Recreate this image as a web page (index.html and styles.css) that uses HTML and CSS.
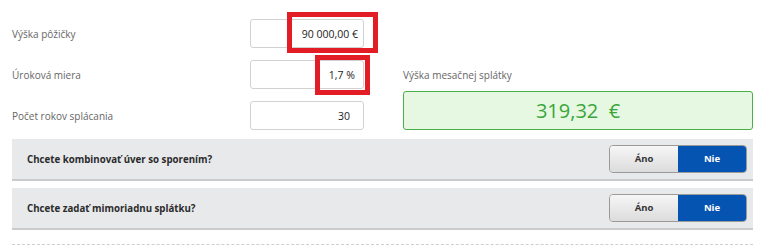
FILE: index.html
```html
<!DOCTYPE html>
<html>
<head>
    <meta charset="utf-8"/>
    <title>Kalkulačka úveru</title>
    <link rel="stylesheet" href="styles.css">
</head>
<body>
<div id="calc">
    <div class="top">
        <div class="fields">
            <div class="row">
                <span class="label">Výška pôžičky</span>
                <div class="field">
                    <input type="text" class="p-sm" value="90 000,00 €" readonly>
                    <span class="mark mark-1"></span>
                </div>
            </div>
            <div class="row">
                <span class="label">Úroková miera</span>
                <div class="field">
                    <input type="text" class="p-md" value="1,7 %" readonly>
                    <span class="mark mark-2"></span>
                </div>
            </div>
            <div class="row">
                <span class="label">Počet rokov splácania</span>
                <div class="field">
                    <input type="text" class="p-lg" value="30" readonly>
                </div>
            </div>
        </div>
        <div class="result">
            <span class="label">Výška mesačnej splátky</span>
            <div class="sum">319,32&nbsp; €</div>
        </div>
    </div>
    <div class="bar">
        <span class="question">Chcete kombinovať úver so sporením?</span>
        <div class="switch">
            <span>Áno</span>
            <span class="on">Nie</span>
        </div>
    </div>
    <div class="bar">
        <span class="question">Chcete zadať mimoriadnu splátku?</span>
        <div class="switch">
            <span>Áno</span>
            <span class="on">Nie</span>
        </div>
    </div>
    <div class="line"></div>
</div>
</body>
</html>
```

FILE: styles.css
```css
* {
    margin: 0;
    padding: 0;
    box-sizing: border-box;
}
body{
    font-family: "Open Sans", "Noto Sans", sans-serif;
    background: #fff;
}
#calc{
    width: 753px;
    padding: 19px 0 0 12px;
}
.top{
    display: flex;
    align-items: flex-end;
}
.fields{
    width: 352px;
}
.row{
    display: flex;
    align-items: center;
    height: 29px;
    margin-bottom: 12px;
}
.row:last-child{
    margin-bottom: 0;
}
.label{
    font-size: 10px;
    color: #666;
}
.row .label{
    width: 238px;
}
.field{
    position: relative;
    width: 114px;
    height: 29px;
}
.field input{
    display: block;
    width: 100%;
    height: 100%;
    border: 1px solid #d2d2d2;
    border-radius: 3px;
    font-family: inherit;
    font-size: 10.5px;
    color: #222;
    text-align: right;
    background: #fff;
    outline: none;
}
.field input.p-sm{
    padding-right: 5px;
}
.field input.p-md{
    padding-right: 8px;
}
.field input.p-lg{
    padding-right: 13px;
}
.mark{
    position: absolute;
    border: 5px solid #e21d26;
}
.mark-1{
    left: 37px;
    top: -7px;
    width: 91px;
    height: 41px;
}
.mark-2{
    left: 65px;
    top: -5px;
    width: 55px;
    height: 40px;
}
.result{
    margin-left: 39px;
    width: 350px;
}
.result .label{
    display: block;
    margin-bottom: 9px;
}
.sum{
    height: 39px;
    line-height: 37px;
    border: 1px solid #4caf4a;
    border-radius: 3px;
    background: #e6f8e2;
    text-align: center;
    font-size: 20px;
    color: #3aa63a;
}
.bar{
    display: flex;
    align-items: center;
    justify-content: space-between;
    height: 42px;
    margin-top: 9px;
    padding: 0 6px 0 15px;
    background: #e8e9eb;
    border-bottom: 2px solid #cbcbcb;
}
.bar + .bar{
    margin-top: 7px;
}
.question{
    font-size: 9.7px;
    font-weight: bold;
    color: #2b2b2b;
}
.switch{
    display: flex;
    width: 138px;
    height: 28px;
    margin-top: -1px;
    border: 1px solid #9a9a9a;
    border-radius: 4px;
    overflow: hidden;
}
.switch span{
    flex: 1;
    font-size: 9.5px;
    font-weight: bold;
    line-height: 26px;
    text-align: center;
    color: #333;
    background: linear-gradient(#f6f6f6, #dcdcdc);
}
.switch span.on{
    color: #fff;
    background: #0654b1;
}
.line{
    margin-top: 14px;
    border-top: 1px dashed #cfcfcf;
}
```
